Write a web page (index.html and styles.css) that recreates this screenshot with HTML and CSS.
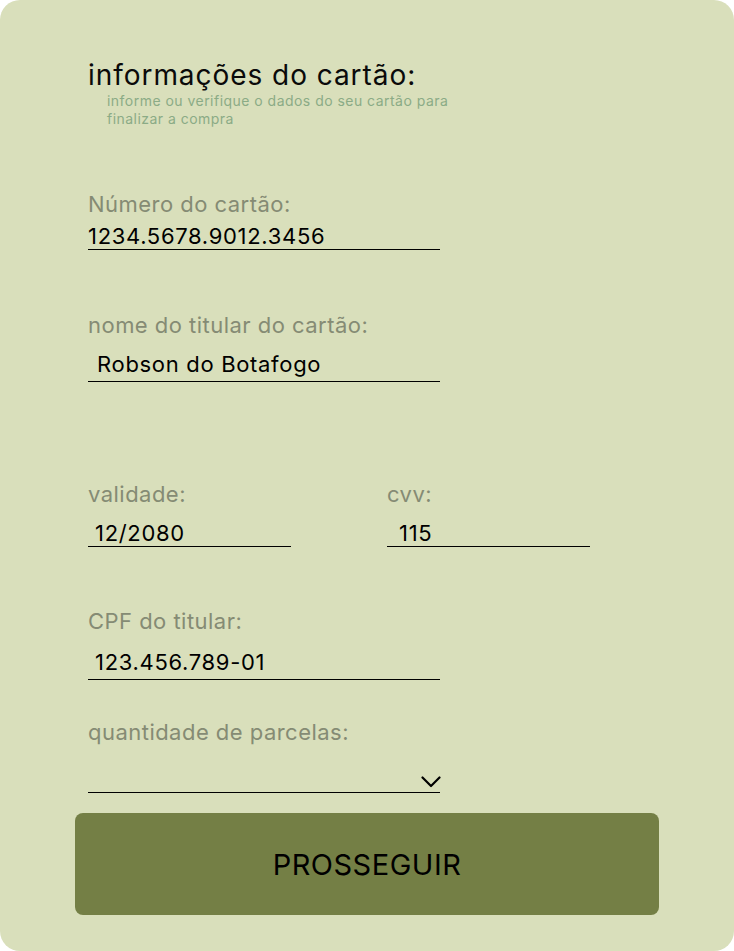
FILE: index.html
```html
<!DOCTYPE html>
<html lang="pt-BR">
<head>
<meta charset="utf-8">
<title>informações do cartão</title>
<link rel="stylesheet" href="styles.css">
</head>
<body>
<main class="card">
  <h1 class="title">informações do cartão:</h1>
  <p class="subtitle">informe ou verifique o dados do seu cartão para finalizar a compra</p>

  <div class="field field-number">
    <div class="label">Número do cartão:</div>
    <div class="value value-number">1234.5678.9012.3456</div>
  </div>

  <div class="field field-name">
    <div class="label">nome do titular do cartão:</div>
    <div class="value value-name">Robson do Botafogo</div>
  </div>

  <div class="row field-row">
    <div class="field col">
      <div class="label">validade:</div>
      <div class="value value-date">12/2080</div>
    </div>
    <div class="field col">
      <div class="label">cvv:</div>
      <div class="value value-cvv">115</div>
    </div>
  </div>

  <div class="field field-cpf">
    <div class="label">CPF do titular:</div>
    <div class="value value-cpf">123.456.789-01</div>
  </div>

  <div class="field field-parcelas">
    <div class="label">quantidade de parcelas:</div>
    <div class="select">
      <svg class="chevron" width="20" height="12" viewBox="0 0 20 12" aria-hidden="true">
        <path d="M1.5 1.5 L10 10 L18.5 1.5" fill="none" stroke="#000" stroke-width="2.2" stroke-linecap="round" stroke-linejoin="round"/>
      </svg>
    </div>
  </div>

  <button class="btn" type="button">PROSSEGUIR</button>
</main>
</body>
</html>
```

FILE: styles.css
```css
* { box-sizing: border-box; }

html, body {
  margin: 0;
  padding: 0;
  background: #ffffff;
}

body {
  font-family: Inter, "Noto Sans", sans-serif;
  color: #000;
}

.card {
  width: 734px;
  height: 951px;
  background: #d9dfbb;
  border-radius: 20px;
  padding: 59px 0 0 88px;
  overflow: hidden;
}

.title {
  margin: 0;
  font-size: 28px;
  font-weight: 400;
  line-height: 32px;
  letter-spacing: 0.95px;
  color: #0a0a0a;
}

.subtitle {
  margin: 1px 0 0 19px;
  width: 360px;
  font-size: 14px;
  line-height: 18px;
  letter-spacing: 0.47px;
  color: #8bab86;
}

.field {
  width: 352px;
}

.label {
  font-size: 22px;
  line-height: 26px;
  letter-spacing: 0.47px;
  color: #858b74;
}

.value {
  font-size: 22px;
  line-height: 26px;
  letter-spacing: 0.68px;
  color: #000;
  border-bottom: 1px solid #000;
}

.field-number { margin-top: 63px; }
.value-number { padding: 6px 0 0 0; }

.field-name { margin-top: 62px; }
.value-name { padding: 13px 0 4px 9px; }

.field-row {
  display: flex;
  gap: 96px;
  margin-top: 99px;
}
.col { width: 203px; }
.value-date { padding: 13px 0 0 7px; }
.value-cvv { padding: 13px 0 0 12px; }

.field-cpf { margin-top: 61px; }
.value-cpf { padding: 15px 0 4px 7px; }

.field-parcelas { margin-top: 39px; }
.select {
  height: 48px;
  display: flex;
  justify-content: flex-end;
  align-items: flex-end;
  padding: 0 0 4px 0;
  border-bottom: 1px solid #000;
}
.chevron { display: block; margin-right: -1px; }

.btn {
  display: block;
  margin: 20px 0 0 -13px;
  width: 584px;
  height: 102px;
  border: none;
  border-radius: 8px;
  background: #747f45;
  color: #000;
  font-family: Inter, "Noto Sans", sans-serif;
  font-size: 29px;
  font-weight: 400;
  letter-spacing: 0.5px;
  padding: 0;
  cursor: pointer;
}
```
